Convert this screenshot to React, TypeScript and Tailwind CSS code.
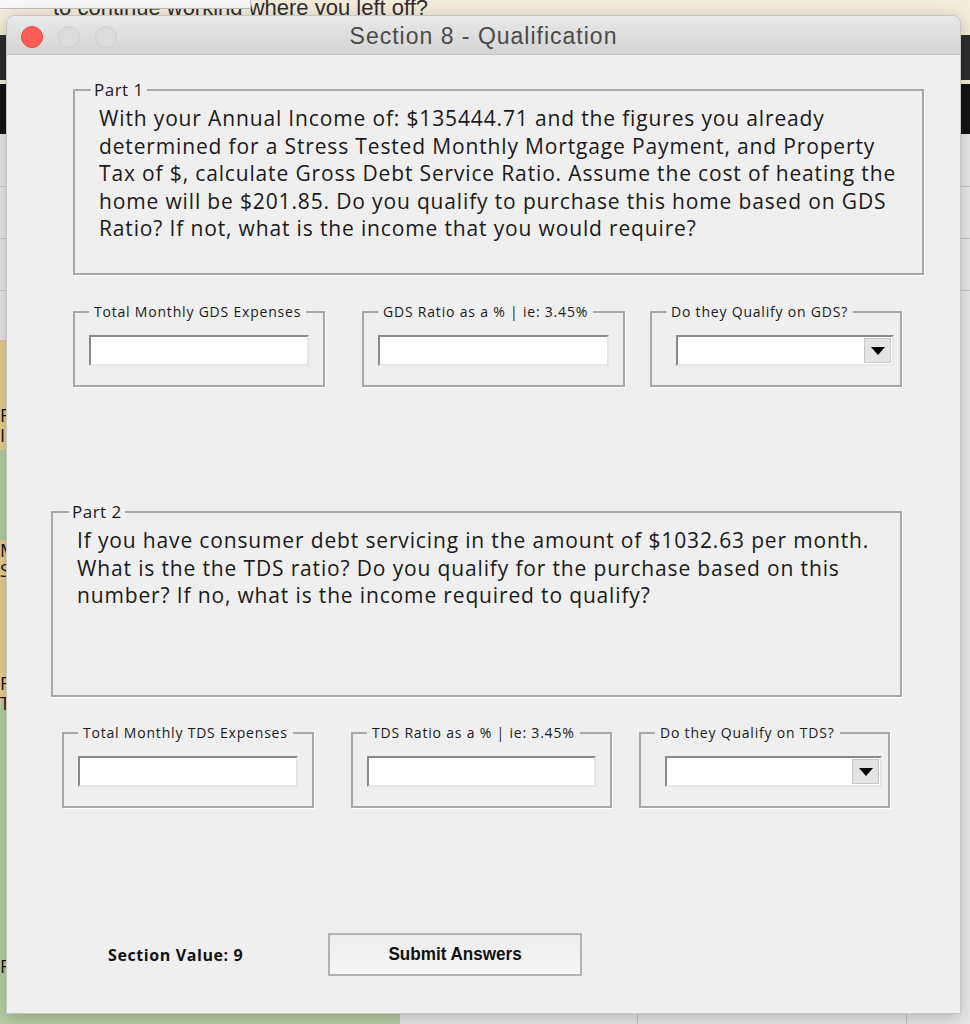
import React from "react";

const body = { fontFamily: "'Open Sans', 'Noto Sans', sans-serif" };

function GroupBox({ label, width, ml, select }: { label: string; width: number; ml: number; select?: boolean }) {
  return (
    <fieldset
      className={`h-[84px] border-2 border-[#a8a8a8] shadow-[1px_1px_0_#ffffff] ${select ? "pl-[24px] pr-[6px]" : "px-[14px]"}`}
      style={{ width, marginLeft: ml }}
    >
      <legend className={`${select ? "-ml-[10px]" : "ml-0"} px-[5px] text-[14px] leading-[18px] tracking-[0.8px] text-[#1a1a1a]`}>{label}</legend>
      <div className="mt-[14px] flex h-[31px] w-full border-2 border-t-[#8a8a8a] border-l-[#8a8a8a] border-b-[#e6e6e6] border-r-[#e6e6e6] bg-white">
        {select && (
          <div className="ml-auto mr-[1px] mt-[1px] flex h-[25px] w-[27px] items-center justify-center border border-[#c8c8c8] bg-[#e4e4e4]">
            <svg width="14" height="8" viewBox="0 0 14 8"><path d="M0 0h14L7 8z" fill="#000" /></svg>
          </div>
        )}
      </div>
    </fieldset>
  );
}

function Part({ label, lines, ml }: { label: string; lines: string[]; ml: number }) {
  return (
    <fieldset
      className="h-[195px] w-[851px] border-2 border-[#a8a8a8] shadow-[1px_1px_0_#ffffff]"
      style={{ marginLeft: ml }}
    >
      <legend className="ml-[16px] px-[3px] text-[17px] leading-[20px] tracking-[0.5px] text-[#1a1a1a]">{label}</legend>
      <div className="mt-[5px] pl-[24px] text-[21px] leading-[27.5px] tracking-[0.85px] text-[#1a1a1a]">
        {lines.map(l => <div key={l} className="whitespace-nowrap">{l}</div>)}
      </div>
    </fieldset>
  );
}

export default function App() {
  return (
    <div className="relative h-[1024px] w-[970px] overflow-hidden bg-[#f3ecda]" style={body}>
      {/* desktop behind the window */}
      <div className="absolute left-[53px] top-[-9px] whitespace-nowrap text-[22px] text-[#2e2e2e]" style={{ fontFamily: "'Liberation Sans', Arial, sans-serif" }}>to continue working where you left off?</div>
      <div className="absolute left-0 top-0 h-[9px] w-[251px] border-b border-r border-[#bdbdbd] bg-[#f7f7f7]" />
      <div className="absolute left-0 top-[35px] h-[45px] w-[970px] bg-[#2c2c2c]" />
      <div className="absolute left-0 top-[84px] h-[50px] w-[970px] bg-[#141414]" />
      <div className="absolute left-0 top-[134px] h-[890px] w-[970px] bg-[#e9e9e9]" />
      <div className="absolute left-0 top-[186px] h-px w-[970px] bg-[#c9c9c9]" />
      <div className="absolute left-0 top-[238px] h-px w-[970px] bg-[#c9c9c9]" />
      <div className="absolute left-0 top-[290px] h-px w-[970px] bg-[#c9c9c9]" />
      <div className="absolute left-0 top-[340px] h-[110px] w-[8px] bg-[#e8cf8d]" />
      <div className="absolute left-0 top-[450px] h-[90px] w-[8px] bg-[#b6cfa5]" />
      <div className="absolute left-0 top-[540px] h-[160px] w-[8px] bg-[#e8cf8d]" />
      <div className="absolute left-0 top-[700px] h-[324px] w-[400px] bg-[#b6cfa5]" />
      <div className="absolute left-[637px] top-[1013px] h-[11px] w-px bg-[#c4c4c4]" />
      <div className="absolute left-[906px] top-[1013px] h-[11px] w-px bg-[#c4c4c4]" />
      <div className="absolute left-0 top-[405px] text-[18px] leading-[20px] text-[#111]">F<br />I</div>
      <div className="absolute left-0 top-[540px] text-[18px] leading-[20px] text-[#111]">M<br />S</div>
      <div className="absolute left-0 top-[673px] text-[18px] leading-[20px] text-[#111]">F<br />T</div>
      <div className="absolute left-0 top-[956px] text-[18px] leading-[20px] text-[#111]">F</div>

      {/* window */}
      <div className="absolute left-[7px] top-[16px] flex h-[997px] w-[953px] flex-col overflow-hidden rounded-t-[8px] bg-[#efefef] shadow-[0_0_0_1px_#c6c6c6,0_4px_18px_rgba(0,0,0,0.25)]">
        <div className="relative flex h-[39px] shrink-0 items-center justify-center border-b border-[#c2c2c2] bg-gradient-to-b from-[#e9e9e9] to-[#d4d4d4] pt-[3px]">
          <div className="absolute left-[14px] top-[10px] flex gap-[15px]">
            <span className="h-[22px] w-[22px] rounded-full border border-[#e2463f] bg-[#fd5f57]" />
            <span className="h-[22px] w-[22px] rounded-full border border-[#d0d0d0] bg-[#dcdcdc]" />
            <span className="h-[22px] w-[22px] rounded-full border border-[#d0d0d0] bg-[#dcdcdc]" />
          </div>
          <span className="text-[23px] tracking-[1px] text-[#4a4a4a]" style={{ fontFamily: "'Liberation Sans', Arial, sans-serif" }}>Section 8 - Qualification</span>
        </div>

        <div className="mt-[25px]">
          <Part
            label="Part 1"
            ml={66}
            lines={[
              "With your Annual Income of: $135444.71 and the figures you already",
              "determined for a Stress Tested Monthly Mortgage Payment, and Property",
              "Tax of $, calculate Gross Debt Service Ratio. Assume the cost of heating the",
              "home will be $201.85. Do you qualify to purchase this home based on GDS",
              "Ratio? If not, what is the income that you would require?",
            ]}
          />
        </div>

        <div className="mt-[28px] flex">
          <GroupBox label="Total Monthly GDS Expenses" width={252} ml={66} />
          <GroupBox label="GDS Ratio as a % | ie: 3.45%" width={263} ml={37} />
          <GroupBox label="Do they Qualify on GDS?" width={252} ml={25} select />
        </div>

        <div className="mt-[115px]">
          <Part
            label="Part 2"
            ml={44}
            lines={[
              "If you have consumer debt servicing in the amount of $1032.63 per month.",
              "What is the the TDS ratio? Do you qualify for the purchase based on this",
              "number? If no, what is the income required to qualify?",
            ]}
          />
        </div>

        <div className="mt-[27px] flex">
          <GroupBox label="Total Monthly TDS Expenses" width={252} ml={55} />
          <GroupBox label="TDS Ratio as a % | ie: 3.45%" width={261} ml={37} />
          <GroupBox label="Do they Qualify on TDS?" width={251} ml={27} select />
        </div>

        <div className="mt-[125px] flex items-center">
          <span className="ml-[101px] w-[220px] text-[16px] font-bold tracking-[0.6px] text-[#111]">Section Value: 9</span>
          <button className="flex h-[43px] w-[254px] items-center justify-center border-2 border-[#b3b3b3] bg-gradient-to-b from-[#ececec] to-[#f7f7f7] text-[#111]">
            <span className="inline-block scale-x-[0.9] text-[19px] font-bold" style={{ fontFamily: "'Liberation Sans', Arial, sans-serif" }}>Submit Answers</span>
          </button>
        </div>
      </div>
    </div>
  );
}
